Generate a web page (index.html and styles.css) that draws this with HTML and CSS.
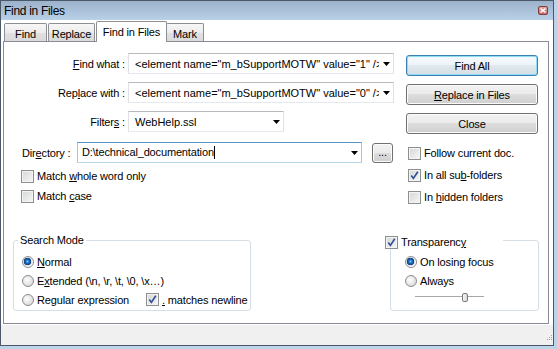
FILE: index.html
```html
<!DOCTYPE html>
<html lang="en">
<head>
	<meta charset="UTF-8">
	<title>Find in Files</title>
	<link rel="stylesheet" href="styles.css">
</head>
<body>
	<div class="window">
		<div class="frame">
			<div class="titlebar">
				<span class="title">Find in Files</span>
				<span class="close-btn">
					<svg width="6" height="5" viewBox="0 0 6 5"><path d="M0.5 0.5L5.5 4.5M5.5 0.5L0.5 4.5" stroke="#fff" stroke-width="1.4"/></svg>
				</span>
			</div>

			<div class="tabs">
				<div class="tab t-find">Find</div>
				<div class="tab t-replace">Replace</div>
				<div class="tab t-files active">Find in Files</div>
				<div class="tab t-mark">Mark</div>
			</div>

			<div class="panel">
				<div class="top">
					<div class="left-col">
						<div class="fields">
							<div class="field-label"><u>F</u>ind what :</div>
							<div class="combo">
								<span class="combo-text">&lt;element name="m_bSupportMOTW" value="1" /&gt;</span>
								<span class="arrow"><svg width="7" height="4"><path d="M0 0h7L3.5 4z" fill="#000"/></svg></span>
							</div>
							<div class="field-label">Rep<u>l</u>ace with :</div>
							<div class="combo">
								<span class="combo-text">&lt;element name="m_bSupportMOTW" value="0" /&gt;</span>
								<span class="arrow"><svg width="7" height="4"><path d="M0 0h7L3.5 4z" fill="#000"/></svg></span>
							</div>
							<div class="field-label">Filter<u>s</u> :</div>
							<div class="combo short">
								<span class="combo-text">WebHelp.ssl</span>
								<span class="arrow"><svg width="7" height="4"><path d="M0 0h7L3.5 4z" fill="#000"/></svg></span>
							</div>
						</div>

						<div class="dir-row">
							<span class="dir-label">Dir<u>e</u>ctory :</span>
							<div class="combo dir focused">
								<span class="combo-text">D:\technical_documentation<span class="caret"></span></span>
								<span class="arrow"><svg width="7" height="4"><path d="M0 0h7L3.5 4z" fill="#000"/></svg></span>
							</div>
							<div class="btn dots">...</div>
						</div>

						<div class="check-row left first">
							<span class="cb"></span><span>Match <u>w</u>hole word only</span>
						</div>
						<div class="check-row left">
							<span class="cb"></span><span>Match <u>c</u>ase</span>
						</div>
					</div>

					<div class="right-col">
						<div class="btn default">Find All</div>
						<div class="btn"><span><u>R</u>eplace in Files</span></div>
						<div class="btn">Close</div>

						<div class="check-row right">
							<span class="cb"></span><span>Follow current doc.</span>
						</div>
						<div class="check-row right">
							<span class="cb on"><svg width="9" height="9" viewBox="0 0 9 9"><path d="M1.3 4.6L3.4 7.4L7.8 0.8" fill="none" stroke="#344f93" stroke-width="1.7"/></svg></span><span>In all su<u>b</u>-folders</span>
						</div>
						<div class="check-row right">
							<span class="cb"></span><span>In <u>h</u>idden folders</span>
						</div>
					</div>
				</div>

				<div class="groups">
					<div class="group search-mode">
						<div class="legend">Search Mode</div>
						<div class="radio-list">
							<div class="radio-row"><span class="rb on"></span><span><u>N</u>ormal</span></div>
							<div class="radio-row"><span class="rb"></span><span>E<u>x</u>tended (\n, \r, \t, \0, \x…)</span></div>
							<div class="radio-row">
								<div class="radio-item"><span class="rb"></span><span>Re<u>g</u>ular expression</span></div>
								<div class="check-inline">
									<span class="cb on"><svg width="9" height="9" viewBox="0 0 9 9"><path d="M1.3 4.6L3.4 7.4L7.8 0.8" fill="none" stroke="#344f93" stroke-width="1.7"/></svg></span><span><u>.</u> matches newline</span>
								</div>
							</div>
						</div>
					</div>

					<div class="group transparency">
						<div class="legend check-legend">
							<span class="cb on"><svg width="9" height="9" viewBox="0 0 9 9"><path d="M1.3 4.6L3.4 7.4L7.8 0.8" fill="none" stroke="#344f93" stroke-width="1.7"/></svg></span><span>Transparenc<u>y</u></span>
						</div>
						<div class="radio-list">
							<div class="radio-row"><span class="rb on"></span><span>On losing focus</span></div>
							<div class="radio-row"><span class="rb"></span><span>Always</span></div>
						</div>
						<div class="slider"><span class="thumb"></span></div>
					</div>
				</div>
			</div>

			<div class="statusbar">
				<svg class="grip" width="6" height="6" viewBox="0 0 6 6">
					<rect x="4" y="0" width="1" height="1" fill="#a0a0a0"/>
					<rect x="2" y="2" width="1" height="1" fill="#a0a0a0"/>
					<rect x="4" y="2" width="1" height="1" fill="#a0a0a0"/>
					<rect x="0" y="4" width="1" height="1" fill="#a0a0a0"/>
					<rect x="2" y="4" width="1" height="1" fill="#a0a0a0"/>
					<rect x="4" y="4" width="1" height="1" fill="#a0a0a0"/>
				</svg>
			</div>
		</div>
	</div>
</body>
</html>
```

FILE: styles.css
```css
*{
	box-sizing: border-box;
}
body{
	margin: 0;
	background: #fff;
	font-family: "Liberation Sans", Arial, sans-serif;
	font-size: 11px;
	letter-spacing: -0.15px;
	color: #000;
}
u{
	text-underline-offset: 1px;
}

/* window frame */
.window{
	width: 557px;
	height: 349px;
	padding: 0 3px 3px 0;
	background: #bcd3ea;
}
.frame{
	height: 346px;
	border: 1px solid #4b5867;
	background: #fff;
	display: flex;
	flex-direction: column;
}
.titlebar{
	height: 19px;
	flex: none;
	display: flex;
	align-items: center;
	padding-left: 3px;
	background: linear-gradient(#9cb2ca, #b9d0e8);
}
.title{
	font-size: 12px;
	letter-spacing: -0.3px;
}
.close-btn{
	margin-left: auto;
	margin-right: 5px;
	width: 10px;
	height: 9px;
	border: 1px solid #8a3b3b;
	border-radius: 2px;
	background: linear-gradient(#dba5a5, #c46a6a);
	display: flex;
	align-items: center;
	justify-content: center;
}

/* tabs */
.tabs{
	height: 21px;
	flex: none;
	display: flex;
	align-items: flex-end;
	padding-left: 3px;
}
.tab{
	height: 18px;
	padding-top: 2px;
	display: flex;
	align-items: center;
	justify-content: center;
	border: 1px solid #8d8f94;
	border-bottom: none;
	border-radius: 2px 2px 0 0;
	background: linear-gradient(#f7f7f7, #ececec 50%, #e1e1e1 51%, #dadada);
	margin-left: 1px;
}
.t-find{
	width: 43px;
	margin-left: 0;
}
.t-replace{
	width: 47px;
}
.t-files{
	width: 71px;
}
.t-mark{
	width: 38px;
	margin-left: -1px;
}
.tab.active{
	height: 21px;
	padding-top: 0;
	margin-bottom: -1px;
	background: #fff;
	position: relative;
	z-index: 1;
}

/* panel */
.panel{
	width: 546px;
	height: 283px;
	flex: none;
	margin-left: 2px;
	border: 1px solid #898c95;
	background: #fff;
}
.top{
	display: flex;
}
.left-col{
	width: 402px;
	padding-top: 11px;
}
.right-col{
	width: 132px;
	padding-top: 13px;
}
.fields{
	display: grid;
	grid-template-columns: 121px 266px;
	grid-auto-rows: 21px;
	column-gap: 3px;
	row-gap: 8px;
}
.field-label{
	text-align: right;
	align-self: center;
}
.combo{
	height: 21px;
	display: flex;
	align-items: center;
	border: 1px solid;
	border-color: #b7b9be #dfe1e6 #e3e9ef #dfe1e6;
	background: #fff;
}
.combo.short{
	width: 156px;
}
.combo.focused{
	border-color: #5c93c6 #a4c9e3 #b7d9ed #a4c9e3;
}
.combo-text{
	flex: 1;
	min-width: 0;
	overflow: hidden;
	white-space: nowrap;
	padding-left: 6px;
	letter-spacing: 0;
}
.arrow{
	flex: none;
	width: 14px;
	display: flex;
	align-items: center;
	justify-content: center;
	padding-top: 1px;
}
.caret{
	display: inline-block;
	width: 1px;
	height: 13px;
	background: #000;
	vertical-align: -3px;
}
.dir-row{
	display: flex;
	align-items: center;
	margin-top: 10px;
	padding-left: 18px;
	height: 21px;
}
.dir-label{
	width: 55px;
}
.combo.dir{
	width: 285px;
}
.combo.dir .combo-text{
	padding-left: 4px;
	letter-spacing: -0.15px;
}
.btn{
	height: 21px;
	display: flex;
	align-items: center;
	justify-content: center;
	border: 1px solid #707070;
	border-radius: 3px;
	background: linear-gradient(#f2f2f2, #ebebeb 49%, #dddddd 50%, #cfcfcf);
	box-shadow: inset 0 0 0 1px #fbfbfb;
	margin-bottom: 8px;
}
.btn.default{
	border-color: #3c7fb1;
	box-shadow: inset 0 0 0 1px #8fdcf5;
	background: linear-gradient(#f4f9fc, #edf4f8 49%, #e0e9ee 50%, #d4dee4);
}
.btn.dots{
	width: 21px;
	height: 20px;
	margin: 1px 0 0 10px;
	padding-bottom: 3px;
}

/* checkboxes and radios */
.check-row{
	display: flex;
	align-items: center;
	gap: 3px;
}
.check-row.left{
	height: 20px;
	padding-left: 17px;
}
.check-row.left.first{
	margin-top: 3px;
}
.check-row.right{
	height: 22px;
	padding-left: 2px;
}
.cb{
	flex: none;
	width: 13px;
	height: 13px;
	border: 1px solid #8e8f8f;
	background: linear-gradient(135deg, #d5d6d7, #f7f7f7);
	box-shadow: inset 0 0 0 1px #f4f4f4;
	display: flex;
	align-items: center;
	justify-content: center;
}
.rb{
	flex: none;
	width: 12px;
	height: 12px;
	border-radius: 50%;
	border: 1px solid #8d8d8d;
	background: radial-gradient(circle at 40% 40%, #ffffff, #d8d8d8 80%);
}
.rb.on{
	background: radial-gradient(circle at 45% 45%, #7fd0fb 0, #1f78c8 1.5px, #0c3d82 3.5px, #dfe3e8 4px, #ffffff 5.5px);
}

/* group boxes */
.groups{
	display: flex;
	justify-content: space-between;
	padding: 0 9px;
	margin-top: 32px;
}
.group{
	height: 71px;
	border: 1px solid #d5dfe5;
	border-radius: 3px;
}
.search-mode{
	width: 238px;
	padding-left: 8px;
}
.transparency{
	width: 149px;
	padding-left: 14px;
}
.legend{
	width: fit-content;
	height: 13px;
	line-height: 13px;
	margin: -7px 0 0 -4px;
	padding: 0 2px;
	background: #fff;
}
.check-legend{
	width: 118px;
	display: flex;
	align-items: center;
	gap: 3px;
	margin: -5px 0 0 -20px;
	padding: 0;
}
.radio-list{
	margin-top: 5px;
}
.transparency .radio-list{
	margin-top: 3px;
}
.radio-row{
	height: 19px;
	display: flex;
	align-items: center;
	gap: 3px;
}
.radio-item{
	width: 121px;
	display: flex;
	align-items: center;
	gap: 3px;
}
.check-inline{
	display: flex;
	align-items: center;
	gap: 3px;
}
.slider{
	width: 69px;
	height: 12px;
	margin: 1px 0 0 10px;
	background: linear-gradient(transparent 5px, #a7a7a7 5px, #a7a7a7 6px, #ffffff 6px, #ffffff 7px, transparent 7px);
	display: flex;
}
.thumb{
	width: 6px;
	height: 9px;
	margin: 2px 0 0 47px;
	border: 1px solid #7a7a7a;
	border-radius: 2px;
	background: linear-gradient(90deg, #f4f4f4, #d8d8d8);
}

/* status bar */
.statusbar{
	height: 20px;
	flex: none;
	margin-top: 1px;
	background: #f0f0f0;
	display: flex;
	justify-content: flex-end;
	align-items: flex-end;
	padding-bottom: 4px;
}
```
